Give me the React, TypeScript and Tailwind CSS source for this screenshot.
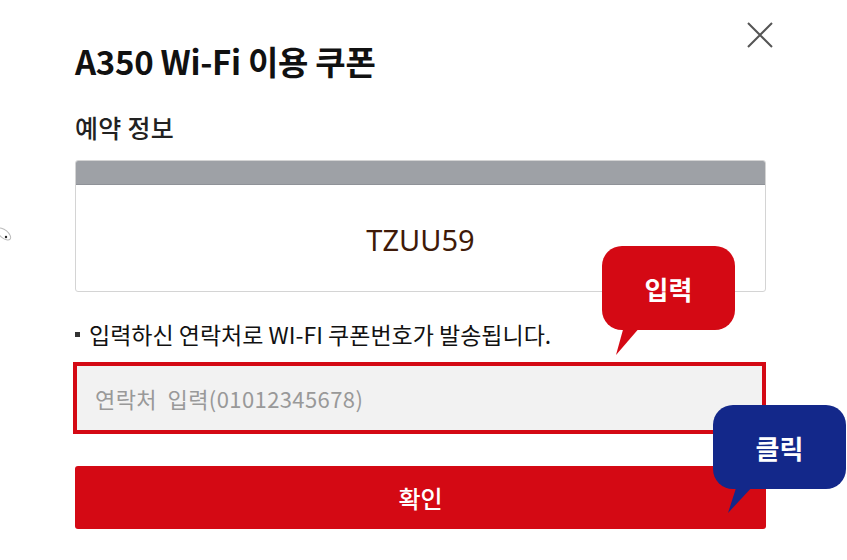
import React from "react";

const KR = "font-['Noto_Sans_CJK_KR','Noto_Sans',sans-serif]";

function Bubble({
  color,
  text,
  className,
}: {
  color: string;
  text: string;
  className: string;
}) {
  return (
    <div className={`absolute ${className}`}>
      <div
        className={`relative z-10 flex h-full w-full items-center justify-center rounded-[20px] text-[26px] font-bold text-white ${KR}`}
        style={{ backgroundColor: color }}
      >
        {text}
      </div>
    </div>
  );
}

export default function App() {
  return (
    <div className={`relative h-[560px] w-[847px] overflow-hidden bg-white ${KR}`}>
      {/* small scribble at left edge */}
      <svg className="absolute left-0 top-[220px]" width="16" height="30" viewBox="0 0 16 30">
        <ellipse cx="4" cy="14" rx="8" ry="4" transform="rotate(40 4 14)" fill="none" stroke="#bbb" strokeWidth="1" />
        <circle cx="6" cy="17" r="1.2" fill="#222" />
      </svg>

      <div className="flex w-[766px] flex-col pl-[75px]">
        {/* header */}
        <div className="flex h-[100px] items-start justify-between">
          <h1 className="mt-[39px] text-[33px] font-bold leading-[44px] tracking-[-0.3px] text-[#111]">
            A350 Wi-Fi 이용 쿠폰
          </h1>
          <button className="-mr-[7px] mt-[22px] h-[26px] w-[26px]">
            <svg width="26" height="26" viewBox="0 0 26 26">
              <path d="M1 1 L25 25 M25 1 L1 25" stroke="#555" strokeWidth="2" />
            </svg>
          </button>
        </div>

        {/* section title */}
        <div className="h-[60px] pt-[10px] text-[25px] font-medium leading-[34px] tracking-[0.3px] text-[#222]">
          예약 정보
        </div>

        {/* reservation card */}
        <div className="flex h-[132px] flex-col overflow-hidden rounded-[3px] border border-[#d4d4d4]">
          <div className="h-[24px] border-b border-[#8f9298] bg-[#9ea1a6]" />
          <div className="flex flex-1 items-center justify-center pt-[4px] font-['Noto_Sans',sans-serif] text-[29px] text-[#3f1a08]">
            TZUU59
          </div>
        </div>

        {/* note */}
        <div className="flex h-[70px] items-center pt-[14px] text-[23px] leading-[30px] tracking-[0px] text-[#111]">
          <span className="mr-[9px] inline-block h-[5px] w-[5px] bg-[#333]" />
          입력하신 연락처로 WI-FI 쿠폰번호가 발송됩니다.
        </div>

        {/* phone input */}
        <div className="-ml-[2px] flex h-[72px] w-[693px] items-center border-[4px] border-[#d40914] bg-[#f2f2f2] pl-[18px]">
          <span className="text-[22px] tracking-[0.4px] text-[#999]">연락처&nbsp; 입력(01012345678)</span>
        </div>

        {/* confirm button */}
        <button className="mt-[32px] flex h-[63px] items-center justify-center rounded-[3px] bg-[#d40914] text-[24px] font-medium text-white">
          확인
        </button>
      </div>

      {/* callout tails */}
      <svg className="absolute left-0 top-0" width="847" height="560" viewBox="0 0 847 560">
        <polygon points="624,326 641,326 616,355" fill="#d40914" />
        <polygon points="737,485 754,485 728,513" fill="#13288a" />
      </svg>

      <Bubble color="#d40914" text="입력" className="left-[602px] top-[246px] h-[84px] w-[133px]" />
      <Bubble color="#13288a" text="클릭" className="left-[713px] top-[405px] h-[84px] w-[133px]" />
    </div>
  );
}
